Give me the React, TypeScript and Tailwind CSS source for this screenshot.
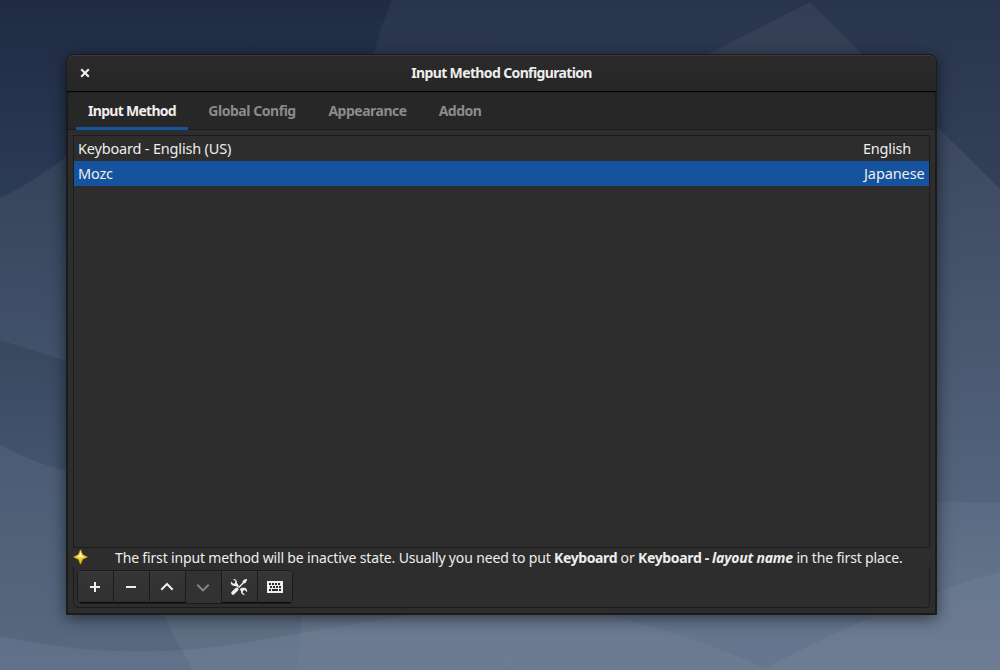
import React from "react";

type Band = { id: string; y1: number; y2: number; from: string; to: string; d: string };

const bands: Band[] = [
  { id: "a", y1: 0, y2: 200, from: "#202b43", to: "#2c3b57", d: "M0 0H392Q379 30 372 60L66 157Q30 184 0 198Z" },
  { id: "b", y1: 157, y2: 361, from: "#35445a", to: "#43526b", d: "M0 198Q30 184 66 157L80 150V366L66 361L0 340Z" },
  { id: "c", y1: 340, y2: 471, from: "#38485f", to: "#43546d", d: "M0 340L66 361L80 366V476L66 471Q30 462 0 445Z" },
  { id: "d", y1: 445, y2: 650, from: "#4a5b73", to: "#57697f", d: "M0 445Q30 462 66 471L80 476V600H480V640L0 670Z" },
  { id: "e", y1: 127, y2: 503, from: "#3c485f", to: "#53647c", d: "M930 120L1000 189V503L930 501Z" },
  { id: "f", y1: 501, y2: 593, from: "#5a6a82", to: "#63748b", d: "M930 501L1000 503V572L930 593Z" },
  { id: "g", y1: 593, y2: 670, from: "#62738b", to: "#65768e", d: "M590 605H940V593L1000 572V670H590Z" },
  { id: "h", y1: 572, y2: 670, from: "#68788f", to: "#6d7c92", d: "M1000 572Q900 598 765 668V670H1000Z" },
  { id: "i", y1: 630, y2: 670, from: "#5d6f87", to: "#61728a", d: "M0 636Q130 665 260 640L430 612V670H0Z" },
  { id: "j", y1: 610, y2: 670, from: "#69798f", to: "#6c7b92", d: "M300 636L430 612H590Q690 632 767 670H297Z" },
];

function Wallpaper() {
  return (
    <svg className="absolute inset-0 h-full w-full" viewBox="0 0 1000 670" preserveAspectRatio="none" aria-hidden="true">
      <defs>
        <linearGradient id="sky" x1="0" y1="0" x2="0" y2="1">
          <stop offset="0" stopColor="#29344d" />
          <stop offset="0.3" stopColor="#344259" />
          <stop offset="0.65" stopColor="#475a73" />
          <stop offset="1" stopColor="#5d6f88" />
        </linearGradient>
        {bands.map((b) => (
          <linearGradient key={b.id} id={`band-${b.id}`} gradientUnits="userSpaceOnUse" x1="0" y1={b.y1} x2="0" y2={b.y2}>
            <stop offset="0" stopColor={b.from} />
            <stop offset="1" stopColor={b.to} />
          </linearGradient>
        ))}
      </defs>
      <rect width="1000" height="670" fill="url(#sky)" />
      {bands.map((b) => (
        <path key={b.id} d={b.d} fill={`url(#band-${b.id})`} />
      ))}
      <path d="M810 2L700 58H866Z" fill="#fff" fillOpacity=".05" />
      <path d="M163 612Q175 640 193 670H297L302 612Z" fill="#fff" fillOpacity=".05" />
      <path d="M302 612L300 636L430 612Z" fill="#fff" fillOpacity=".09" />
    </svg>
  );
}

const buttonBase =
  "flex h-full items-center justify-center border-r border-[#1b1b1b] last:border-r-0 shadow-[inset_0_1px_0_#3a3a3a,inset_0_-1px_0_#0a0a0a] bg-linear-to-b from-[#363636] to-[#303030]";

function Toolbar() {
  return (
    <div className="flex h-[34px] w-[216px] overflow-hidden rounded-[5px] border border-[#1b1b1b] text-[#eeeeec]">
      <button aria-label="Add" className={`${buttonBase} w-9 pr-px`}>
        <svg width="16" height="16" viewBox="0 0 16 16" fill="currentColor" shapeRendering="crispEdges"><path d="M7 3h2v4h4v2H9v4H7V9H3V7h4z" /></svg>
      </button>
      <button aria-label="Remove" className={`${buttonBase} w-9 pr-px`}>
        <svg width="16" height="16" viewBox="0 0 16 16" fill="currentColor" shapeRendering="crispEdges"><path d="M3 7h10v2H3z" /></svg>
      </button>
      <button aria-label="Move up" className={`${buttonBase} w-9 pr-px`}>
        <svg width="16" height="16" viewBox="0 0 16 16" fill="none" stroke="currentColor" strokeWidth="2"><path d="M2.300 10.700L8 5l5.700 5.700" /></svg>
      </button>
      <button aria-label="Move down" disabled className="flex h-full w-9 items-center justify-center border-r border-[#1b1b1b] bg-[#323232] pr-px text-[#858585]">
        <svg width="16" height="16" viewBox="0 0 16 16" fill="none" stroke="currentColor" strokeWidth="2"><path d="M2.300 5.700L8 11.400l5.700-5.700" /></svg>
      </button>
      <button aria-label="Configure" className={`${buttonBase} w-9 pr-px`}>
        <svg width="18" height="18" viewBox="0 0 18 18" fill="none" stroke="currentColor">
          <path d="M5.500 6L8.300 8.600M10.500 11L13 13" strokeWidth="2.200" />
          <path d="M3 1L5.500 3.300L5 5.300L3.300 5.700L1 3.600C.3 6 2 8.300 4.800 8L6.500 8.300L8 6.500L7 5C7.400 2.500 5.500 .5 3 1Z" fill="currentColor" stroke="none" />
          <path d="M15 16.800L12.600 14.500L13.100 12.500L14.800 12.100L17 14.200C17.700 11.800 16 9.600 13.200 9.900L11.800 9.600L10.200 11.200L11 12.800C10.600 15.300 12.500 17.300 15 16.800Z" fill="currentColor" stroke="none" />
          <path d="M16 2L8.500 9.800" strokeWidth="1.300" />
          <path d="M16.200 .8L17.200 1.800L15.500 5L13.500 5.500L12.500 4.500L13 2.500Z" fill="currentColor" stroke="none" />
          <path d="M6.800 11.300L3 15" strokeWidth="3.600" strokeLinecap="round" />
        </svg>
      </button>
      <button aria-label="Keyboard layout" className={`${buttonBase} w-[34px]`}>
        <svg width="16" height="14" viewBox="0 0 16 14" shapeRendering="crispEdges">
          <rect y="1" width="16" height="12" rx="1" fill="#eeeeec" />
          <path d="M2 3h2v2H2zM5 3h2v2H5zM8 3h2v2H8zM11 3h2v2h-2zM3 6h2v2H3zM6 6h2v2H6zM9 6h2v2H9zM12 6h2v2h-2zM2 9h2v2H2zM5 9h6v2H5zM12 9h2v2h-2z" fill="#2b2b2b" />
        </svg>
      </button>
    </div>
  );
}

function Star() {
  return (
    <svg className="-mt-[2px]" width="15" height="16" viewBox="0 0 15 16" aria-hidden="true">
      <defs>
        <linearGradient id="gold" x1="0" y1="0" x2="0" y2="1">
          <stop offset="0" stopColor="#fff38a" />
          <stop offset="1" stopColor="#e0b80b" />
        </linearGradient>
      </defs>
      <path d="M7.500 .8L9.600 5.700L14.300 8L9.600 10.300L7.500 15.200L5.400 10.300L.7 8L5.400 5.700Z" fill="url(#gold)" stroke="#c4a20c" strokeWidth=".8" strokeLinejoin="round" />
      <path d="M7.500 3.500L8.700 6.800L11 8L4.500 7.700L6.500 6.500Z" fill="#fffbd0" />
    </svg>
  );
}

export default function App() {
  return (
    <main className="relative h-[670px] w-[1000px] overflow-hidden pt-[54px] pl-[66px] text-[14.5px] text-[#eeeeec] [font-family:'Noto_Sans',sans-serif]">
      <Wallpaper />
      <section className="relative flex h-[561px] w-[871px] flex-col overflow-hidden rounded-t-[8px] border border-[#1b1b1b] bg-[#2d2d2d] shadow-[0_3px_16px_rgba(0,0,0,0.55)]">
        <header className="grid h-[37px] shrink-0 grid-cols-[36px_1fr_36px] items-center rounded-t-[7px] border-b border-[#050505] bg-linear-to-b from-[#2b2b2b] to-[#262626] shadow-[inset_0_1px_0_#3a3838]">
          <button aria-label="Close" className="flex justify-center">
            <svg width="10" height="10" viewBox="0 0 10 10" stroke="#eeeeec" strokeWidth="2.200"><path d="M1.200 1.200L8.800 8.800M8.800 1.200L1.200 8.800" /></svg>
          </button>
          <h1 className="pb-[2px] text-center text-[14px] font-bold whitespace-nowrap tracking-[-0.63px]">Input Method Configuration</h1>
        </header>
        <div className="flex min-h-0 flex-1 flex-col border-x border-b border-[#1b1b1b]">
          <nav className="flex h-[38px] shrink-0 border-b border-[#1b1b1b] bg-[#272727] pl-2 text-[14px] font-bold whitespace-nowrap text-[#8b8b89] shadow-[inset_0_1px_0_#1f1f1f]">
            <a className="-mb-px flex w-[112px] items-center justify-center border-b-[3px] border-[#15539e] pt-[1px] tracking-[-0.72px] text-[#eeeeec]">Input Method</a>
            <a className="flex w-32 items-center justify-center tracking-[-0.45px]">Global Config</a>
            <a className="flex w-[103px] items-center justify-center tracking-[-0.5px]">Appearance</a>
            <a className="flex w-[82px] items-center justify-center tracking-[-0.5px]">Addon</a>
          </nav>
          <div className="mx-[5px] mt-[5px] h-[413px] shrink-0 border border-[#1b1b1b]">
            <div className="flex h-[25px] items-center justify-between pr-[4px] pl-[4px]"><span className="tracking-[-0.18px]">Keyboard - English (US)</span><span className="w-[62px] whitespace-nowrap tracking-[-0.2px]">English</span></div>
            <div className="flex h-[25px] items-center justify-between bg-[#15539e] pr-[4px] pl-[4px]"><span className="tracking-[-0.2px]">Mozc</span><span className="w-[62px] pl-px whitespace-nowrap tracking-[-0.1px]">Japanese</span></div>
          </div>
          <div className="mx-[5px] flex h-[19px] shrink-0 items-center">
            <Star />
            <p className="ml-[27px] text-[14px] whitespace-nowrap tracking-[-0.155px]">The first input method will be inactive state. Usually you need to put <b className="tracking-[-0.4px]">Keyboard</b> or <b className="tracking-[-0.35px]">Keyboard - <i className="tracking-[-0.2px]">layout name</i></b> in the first place.</p>
          </div>
          <div className="mx-[5px] h-[41px] shrink-0 rounded-b-[5px] border-x border-b border-[#1b1b1b] pt-[3px] pl-[3px]">
            <Toolbar />
          </div>
        </div>
      </section>
    </main>
  );
}
